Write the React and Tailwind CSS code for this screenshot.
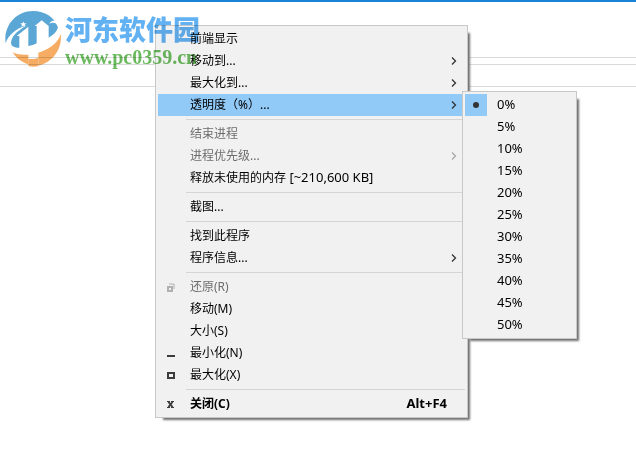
import React from 'react';
import clsx from 'clsx';

const RestoreIcon = () => (
  <svg width="9" height="9" viewBox="0 0 9 9" fill="none" aria-hidden="true">
    <path d="M3 1H8V6" stroke="#b0b0b0" />
    <rect x="2" y="4" width="4" height="4" stroke="#b0b0b0" strokeWidth="2" />
  </svg>
);

const MinimizeIcon = () => (
  <svg width="9" height="9" viewBox="0 0 9 9" aria-hidden="true">
    <rect x="1" y="6" width="8" height="2" fill="#3c3c3c" />
  </svg>
);

const MaximizeIcon = () => (
  <svg width="9" height="9" viewBox="0 0 9 9" fill="none" aria-hidden="true">
    <rect x="2" y="2" width="6" height="5" stroke="#3c3c3c" strokeWidth="2" />
  </svg>
);

const CloseIcon = () => (
  <svg width="9" height="9" viewBox="0 0 9 9" fill="none" aria-hidden="true">
    <path d="M2.500 2L6.500 7M6.500 2L2.500 7" stroke="#3c3c3c" strokeWidth="2" />
    <path d="M1 1.500H4M5 1.500H8M1 7.500H4M5 7.500H8" stroke="#3c3c3c" />
  </svg>
);

const Chevron = () => (
  <svg width="6" height="8" viewBox="0 0 6 8" fill="none" stroke="currentColor" strokeWidth="1.3" aria-hidden="true">
    <path d="M1 0.500L4.500 4L1 7.500" />
  </svg>
);

const groups = [
  [
    { label: '前端显示' },
    { label: '移动到...', arrow: true },
    { label: '最大化到...', arrow: true },
    { label: '透明度（%）...', arrow: true, open: true },
  ],
  [
    { label: '结束进程', disabled: true },
    { label: '进程优先级...', arrow: true, disabled: true },
    { label: '释放未使用的内存', detail: ' [~210,600 KB]' },
  ],
  [{ label: '截图...' }],
  [{ label: '找到此程序' }, { label: '程序信息...', arrow: true }],
  [
    { label: '还原(R)', icon: <RestoreIcon />, disabled: true },
    { label: '移动(M)' },
    { label: '大小(S)' },
    { label: '最小化(N)', icon: <MinimizeIcon /> },
    { label: '最大化(X)', icon: <MaximizeIcon /> },
  ],
  [{ label: '关闭(C)', icon: <CloseIcon />, shortcut: 'Alt+F4', bold: true }],
];

const levels = ['0%', '5%', '10%', '15%', '20%', '25%', '30%', '35%', '40%', '45%', '50%'];

const panel = 'border border-[#c8c8c8] bg-[#f1f1f1] p-0.5 shadow-[5px_5px_2px_-3px_#707070]';

const OpacityMenu = () => (
  <div role="menu" aria-label="透明度" className={clsx(panel, 'absolute -top-[3px] left-full z-10 -ml-[3px] w-[115px] text-[13px]')}>
    {levels.map((level, index) => (
      <button key={level} type="button" role="menuitemradio" aria-checked={index === 0} className="flex h-[22px] w-full items-center gap-2.5 text-left">
        <span className={clsx('flex h-full w-[22px] items-center justify-center', index === 0 && 'bg-[#91c9f7]')}>
          {index === 0 && <span className="size-1.5 rounded-full bg-[#333333]"></span>}
        </span>
        <span className="pb-0.5">{level}</span>
      </button>
    ))}
  </div>
);

const MenuItem = ({ item }) => (
  <div className="relative">
    <button
      type="button"
      role="menuitem"
      disabled={item.disabled}
      aria-haspopup={item.arrow ? 'menu' : undefined}
      className={clsx(
        'flex h-[22px] w-full items-center pr-2 text-left whitespace-nowrap',
        item.open && 'bg-[#91c9f7]',
        item.disabled && 'text-[#6d6d6d]',
        item.bold && 'font-bold'
      )}
    >
      <span className="flex w-8 shrink-0 pl-2">{item.icon}</span>
      <span className="flex-grow">
        {item.label}
        {item.detail && <span className="text-[13px] leading-none">{item.detail}</span>}
      </span>
      {item.shortcut && <span className="pr-2.5 pb-0.5 text-[13px]">{item.shortcut}</span>}
      {item.arrow && <span className={item.disabled ? 'text-[#a9a9a9]' : 'text-[#333333]'}><Chevron /></span>}
    </button>
    {item.open && <OpacityMenu />}
  </div>
);

const SystemMenu = () => (
  <div role="menu" aria-label="窗口菜单" className={clsx(panel, 'absolute top-[25px] left-[155px] w-[313px]')}>
    {groups.map((items, index) => (
      <React.Fragment key={index}>
        {index > 0 && <div role="separator" className="my-[3px] ml-7 h-px bg-[#d5d5d5]"></div>}
        {items.map((item) => (
          <MenuItem key={item.label} item={item} />
        ))}
      </React.Fragment>
    ))}
  </div>
);

const Logo = () => (
  <svg width="57" height="56" viewBox="15 33 171 168" className="shrink-0" aria-hidden="true">
    {/* blue cap, running down to the band right of the tower */}
    <path d="M17 130C10 80 45 33 100 33C135 33 162 52 174 80C172 94 160 104 146 113V78L125 61L104 78H110V130C102 134 94 137 85 138V80L50 108H58V143C40 143 30 137 34 122C39 104 56 91 80 76C48 86 24 106 17 130Z" fill="#5aa7d6" />
    <path d="M148 71C160 66 170 69 172 78L178 88C180 78 176 66 166 62C160 61 152 64 148 71Z" fill="#ffffff" />
    {/* orange base */}
    <path d="M182 102C188 150 155 188 115 197V158C149 147 175 128 182 102Z" fill="#f6ad63" />
    <path d="M38 157C54 165 69 165 85 164V193C65 187 48 174 38 157Z" fill="#f6ad63" />
    <path d="M85 176C95 178 106 177 115 173V198C105 201 94 200 85 198Z" fill="#f6ad63" />
    <path d="M70 64L72 70L79 70L74 75L76 81L70 77L64 81L66 75L61 70L68 70Z" fill="#ffffff" />
  </svg>
);

const Watermark = () => (
  <div className="pointer-events-none absolute top-[11px] left-[5px] flex gap-[3px] mix-blend-multiply">
    <Logo />
    <div className="flex flex-col whitespace-nowrap">
      <span className="font-['Noto_Sans_CJK_SC',sans-serif] text-[27px] leading-9 font-black text-[#62b1f2]">河东软件园</span>
      <span className="font-['Liberation_Serif',serif] text-[20px] leading-5 font-bold text-[#6cba5f]">www.pc0359.cn</span>
    </div>
  </div>
);

const App = () => {
  return (
    <div className="relative isolate min-h-screen overflow-hidden bg-white font-['Noto_Sans','Noto_Sans_CJK_SC',sans-serif] text-[12px] leading-4 text-black">
      {/* Window behind the menu */}
      <div className="h-[58px] border-t-2 border-b border-t-[#1883d7] border-b-[#d9d9d9]"></div>
      <div className="h-[7px] border-b border-[#d9d9d9]"></div>
      <div className="h-[22px] border-b border-[#d9d9d9]"></div>

      <SystemMenu />
      <Watermark />
    </div>
  );
};

export default App;
